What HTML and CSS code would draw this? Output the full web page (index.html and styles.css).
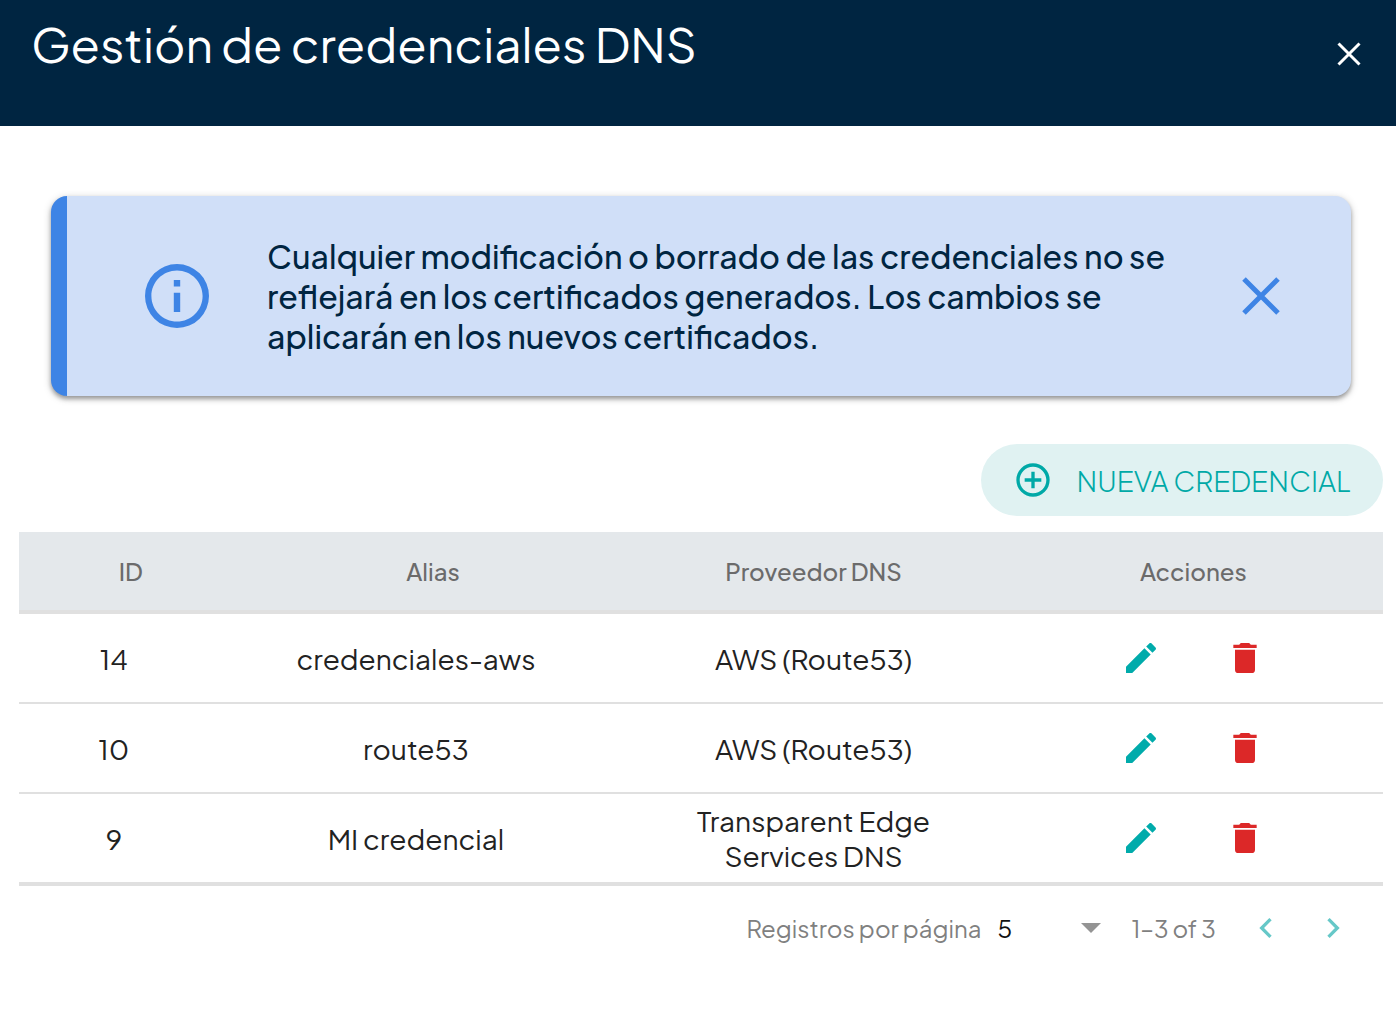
FILE: index.html
```html
<!DOCTYPE html>
<html lang="es">
<head>
<meta charset="utf-8">
<meta name="viewport" content="width=device-width, initial-scale=1">
<title>Gestión de credenciales DNS</title>
<link rel="stylesheet" href="styles.css">
</head>
<body>
<svg class="sprite" aria-hidden="true">
  <symbol id="pencil" viewBox="0 0 24 24"><path d="M20.71 7.04c.39-.39.39-1.04 0-1.41l-2.34-2.34c-.37-.39-1.02-.39-1.41 0l-1.84 1.83 3.75 3.75M3 17.25V21h3.75L17.81 9.93l-3.75-3.75L3 17.25z"/></symbol>
  <symbol id="trash" viewBox="0 0 24 24"><path d="M19 4h-3.500l-1-1h-5l-1 1H5v2h14M6 19a2 2 0 0 0 2 2h8a2 2 0 0 0 2-2V7H6v12z"/></symbol>
</svg>
<header class="topbar">
  <h1 class="title">Gestión de credenciales DNS</h1>
  <button class="icon-button close" type="button" aria-label="Cerrar">
    <svg width="24" height="24" viewBox="0 0 24 24"><path class="cross" stroke-width="3" d="M1.500 1.500l21 21M22.500 1.500l-21 21"/></svg>
  </button>
</header>
<main class="content">
  <section class="alert" role="status">
    <svg class="alert-icon" width="64" height="64" viewBox="2 2 20 20"><path d="M11 9h2V7h-2m1 13c-4.410 0-8-3.590-8-8s3.590-8 8-8 8 3.590 8 8-3.590 8-8 8m0-18A10 10 0 0 0 2 12a10 10 0 0 0 10 10 10 10 0 0 0 10-10A10 10 0 0 0 12 2m-1 15h2v-6h-2v6z"/></svg>
    <p class="alert-text">Cualquier modificación o borrado de las credenciales no se reflejará en los certificados generados. Los cambios se aplicarán en los nuevos certificados.</p>
    <button class="icon-button dismiss" type="button" aria-label="Descartar aviso">
      <svg width="40" height="40" viewBox="0 0 40 40"><path class="cross" stroke-width="5" d="M3 3l34 34M37 3L3 37"/></svg>
    </button>
  </section>
  <div class="toolbar">
    <button class="new-button" type="button">
      <svg width="40" height="40" viewBox="0 0 24 24"><path d="M12 20c-4.410 0-8-3.590-8-8s3.590-8 8-8 8 3.590 8 8-3.590 8-8 8m0-18A10 10 0 0 0 2 12a10 10 0 0 0 10 10 10 10 0 0 0 10-10A10 10 0 0 0 12 2m1 5h-2v4H7v2h4v4h2v-4h4v-2h-4V7z"/></svg>
      <span>NUEVA CREDENCIAL</span>
    </button>
  </div>
  <table class="grid">
    <colgroup><col class="col-id"><col class="col-alias"><col class="col-provider"><col class="col-actions"></colgroup>
    <thead>
      <tr><th class="sortable" scope="col">ID</th><th class="sortable" scope="col">Alias</th><th scope="col">Proveedor DNS</th><th scope="col">Acciones</th></tr>
    </thead>
    <tbody>
      <tr>
        <td>14</td><td>credenciales-aws</td><td>AWS (Route53)</td>
        <td><div class="actions"><button class="icon-button edit" type="button" aria-label="Editar 14"><svg width="40" height="40"><use href="#pencil"/></svg></button><button class="icon-button delete" type="button" aria-label="Eliminar 14"><svg width="40" height="40"><use href="#trash"/></svg></button></div></td>
      </tr>
      <tr>
        <td>10</td><td>route53</td><td>AWS (Route53)</td>
        <td><div class="actions"><button class="icon-button edit" type="button" aria-label="Editar 10"><svg width="40" height="40"><use href="#pencil"/></svg></button><button class="icon-button delete" type="button" aria-label="Eliminar 10"><svg width="40" height="40"><use href="#trash"/></svg></button></div></td>
      </tr>
      <tr>
        <td>9</td><td>MI credencial</td><td>Transparent Edge Services DNS</td>
        <td><div class="actions"><button class="icon-button edit" type="button" aria-label="Editar 9"><svg width="40" height="40"><use href="#pencil"/></svg></button><button class="icon-button delete" type="button" aria-label="Eliminar 9"><svg width="40" height="40"><use href="#trash"/></svg></button></div></td>
      </tr>
    </tbody>
  </table>
  <nav class="pager" aria-label="Paginación">
    <label for="page-size">Registros por página</label>
    <span class="select-wrap">
      <select id="page-size" class="page-size"><option>5</option><option>10</option><option>25</option></select>
      <svg class="caret" width="20" height="10" viewBox="0 0 20 10"><path d="M0 0h20L10 10z"/></svg>
    </span>
    <span class="range">1–3 of 3</span>
    <button class="icon-button page" type="button" aria-label="Página anterior"><svg width="40" height="40" viewBox="0 0 24 24"><path d="M15.410 16.580L10.830 12l4.580-4.590L14 6l-6 6 6 6 1.410-1.420z"/></svg></button>
    <button class="icon-button page next" type="button" aria-label="Página siguiente"><svg width="40" height="40" viewBox="0 0 24 24"><path d="M8.590 16.580L13.170 12 8.590 7.410 10 6l6 6-6 6-1.410-1.420z"/></svg></button>
  </nav>
</main>
</body>
</html>
```
FILE: styles.css
```css
* { box-sizing: border-box; }

body {
  margin: 0;
  background: #fff;
  color: #222;
  font-family: "Plus Jakarta Sans", Inter, "Liberation Sans", sans-serif;
  font-size: 28px;
}

button, select { font: inherit; color: inherit; }
svg { display: block; flex: none; fill: currentColor; }
.sprite { display: none; }
.cross { fill: none; stroke: currentColor; }

.icon-button {
  display: block;
  flex: none;
  padding: 0;
  border: 0;
  background: none;
  cursor: pointer;
}

.topbar {
  display: flex;
  justify-content: space-between;
  align-items: flex-start;
  padding: 12px 35px 50px 31px;
  background: #002541;
  color: #fff;
}

.title {
  margin: 0;
  font-size: 48px;
  line-height: 64px;
  font-weight: 400;
}

.close { margin-top: 30px; }

.content { padding: 70px 13px 56px 19px; }

.alert {
  display: flex;
  align-items: center;
  margin: 0 32px 48px;
  padding: 40px 70px 40px 78px;
  border-left: 16px solid #3e84e5;
  border-radius: 16px;
  background: #d0dff8;
  box-shadow: 0 2px 8px rgba(0, 0, 0, .2), 0 3px 4px rgba(0, 0, 0, .3);
}

.alert-icon, .dismiss { color: #3e84e5; }

.alert-text {
  flex: 1;
  margin: 0 56px 0 58px;
  color: #002541;
  font-size: 32px;
  line-height: 40px;
  font-weight: 500;
}

.toolbar { display: flex; justify-content: flex-end; margin-bottom: 16px; }

.new-button {
  display: flex;
  align-items: center;
  gap: 24px;
  height: 72px;
  padding: 0 32px;
  border: 0;
  border-radius: 36px;
  background: #e0f2f2;
  color: #00a9a7;
  font-weight: 300;
  cursor: pointer;
}

.grid {
  width: 100%;
  border-collapse: separate;
  border-spacing: 0;
  border-bottom: 4px solid #e0e0e0;
  table-layout: fixed;
}

.col-id { width: 13.9%; }
.col-alias { width: 30.4%; }
.col-provider { width: 27.9%; }
.col-actions { width: 27.8%; }

.grid th {
  height: 82px;
  padding: 0;
  border-bottom: 4px solid #e0e0e0;
  background: #e4e8eb;
  color: #6b6b6b;
  font-size: 24px;
  font-weight: 500;
}

.grid .sortable { padding-left: 34px; }

.grid td {
  height: 90px;
  padding: 0 40px;
  border-bottom: 2px solid #e0e0e0;
  line-height: 35px;
  text-align: center;
}

.grid td:first-child { padding: 0; }
.grid tr:last-child td { height: 88px; border-bottom: 0; }

.actions { display: flex; justify-content: center; gap: 64px; }
.edit { color: #00abab; }
.delete { color: #dc2828; }

.pager {
  display: flex;
  justify-content: flex-end;
  align-items: center;
  margin-top: 22px;
  padding-right: 30px;
  color: #808080;
  font-size: 24px;
  line-height: 40px;
}

.select-wrap { display: grid; align-items: center; width: 104px; margin: 0 30px 0 16px; }

.page-size {
  grid-area: 1 / 1;
  width: 100%;
  padding: 0;
  border: 0;
  background: none;
  color: #111;
  appearance: none;
}

.caret { grid-area: 1 / 1; justify-self: end; color: #949494; pointer-events: none; }
.range { margin-right: 30px; }
.page { color: #66c8c8; }
.next { margin-left: 27px; }
```
